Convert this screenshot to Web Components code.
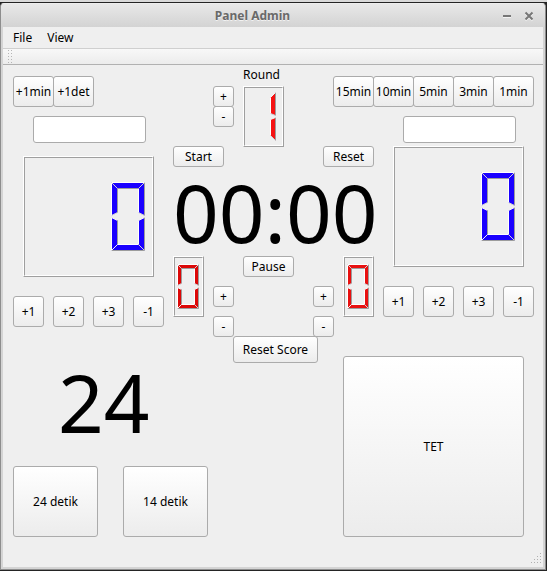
<!DOCTYPE html>
<html lang="id"><head><meta charset="utf-8"><title>Panel Admin</title>
<style>
html,body{margin:0;height:100%;overflow:hidden;background:#2b2b2b}
body{font:12px/16px "Noto Sans","Open Sans",sans-serif;color:#000}
</style></head><body>
<panel-window caption="Panel Admin">
  <menu-bar slot="menu"><span>File</span><span>View</span></menu-bar>
  <tool-strip slot="tools"></tool-strip>
  <control-board>
    <button-row style="--c:2;--r:2;--gap:-1px"><push-button style="--w:41px">+1min</push-button><push-button style="--w:41px">+1det</push-button></button-row>
    <text-field style="--c:4;--r:6"></text-field>
    <lcd-number digit="0" dw="33" dh="68" t="6" color="#1a00ff" style="--c:3;--r:10;--w:131px;--h:121px;--pr:7px"></lcd-number>
    <button-row style="--c:2;--r:24;--gap:9px"><push-button>+1</push-button><push-button>+2</push-button><push-button>+3</push-button><push-button>-1</push-button></button-row>

    <push-button style="--c:22;--r:3;--w:21px;--h:21px">+</push-button>
    <push-button style="--c:22;--r:5;--w:21px;--h:21px">-</push-button>
    <text-label style="--c:25;--r:1">Round</text-label>
    <lcd-number digit="1" dw="24" dh="48" t="5" color="#f51313" style="--c:25;--r:3;--w:41px;--h:61px;--pr:6px"></lcd-number>
    <push-button style="--c:18;--r:9;--w:51px;--h:21px">Start</push-button>
    <push-button style="--c:33;--r:9;--w:51px;--h:21px">Reset</push-button>
    <big-digits style="--c:18;--r:12">00:00</big-digits>
    <push-button style="--c:25;--r:20;--w:51px;--h:21px">Pause</push-button>
    <lcd-number digit="0" dw="21" dh="44" t="4" color="#dc0808" style="--c:18;--r:20;--w:31px;--h:61px;--pr:3px"></lcd-number>
    <button-row class="v" style="--c:22;--r:23;--gap:9px"><push-button style="--w:21px;--h:21px">+</push-button><push-button style="--w:21px;--h:21px">-</push-button></button-row>
    <button-row class="v" style="--c:32;--r:23;--gap:9px"><push-button style="--w:21px;--h:21px">+</push-button><push-button style="--w:21px;--h:21px">-</push-button></button-row>
    <lcd-number digit="0" dw="21" dh="44" t="4" color="#e81010" style="--c:35;--r:20;--w:31px;--h:61px;--pr:3px"></lcd-number>
    <push-button style="--c:24;--r:28;--w:85px;--h:27px">Reset Score</push-button>

    <button-row style="--c:34;--r:2;--gap:-1px"><push-button style="--w:41px">15min</push-button><push-button style="--w:41px">10min</push-button><push-button style="--w:41px">5min</push-button><push-button style="--w:41px">3min</push-button><push-button style="--w:41px">1min</push-button></button-row>
    <text-field style="--c:41;--r:6"></text-field>
    <lcd-number digit="0" dw="33" dh="68" t="6" color="#1a00ff" style="--c:40;--r:9;--w:131px;--h:121px;--pr:7px"></lcd-number>
    <button-row style="--c:39;--r:23;--gap:9px"><push-button>+1</push-button><push-button>+2</push-button><push-button>+3</push-button><push-button>-1</push-button></button-row>

    <big-digits style="--c:6;--r:31;--indent:5px">24</big-digits>
    <button-row style="--c:2;--r:41;--gap:25px"><push-button style="--w:85px;--h:71px">24 detik</push-button><push-button style="--w:85px;--h:71px">14 detik</push-button></button-row>
    <push-button style="--c:35;--r:30;--w:181px;--h:181px">TET</push-button>
  </control-board>
</panel-window>
<script>
const cell = 'grid-column-start:var(--c,auto);grid-row-start:var(--r,auto);';
function define(name, html, setup) {
  customElements.define(name, class extends HTMLElement {
    constructor() {
      super();
      this.attachShadow({mode:'open'}).innerHTML = html;
    }
    connectedCallback() { if (setup) setup(this, this.shadowRoot); }
  });
}

define('panel-window', `<style>
:host{display:flex;flex-direction:column;box-sizing:border-box;width:547px;height:571px;border-top:2px solid #d9d9d9;background:#242424;padding:1px 1px 1px 0}
.frame{flex:1;display:flex;flex-direction:column;box-sizing:border-box;border:1px solid #8d8d8d;border-top-color:#ededed;border-radius:4px 4px 0 0;background:#d4d4d4;padding:0 2px 2px;overflow:hidden}
header{height:23px;flex:none;margin:0 -2px;display:grid;grid-template-columns:1fr 48px;align-items:center;background:linear-gradient(#e8e8e8,#d3d3d3);color:#696969;font-weight:bold;text-shadow:0 1px #f2f2f2}
h1{font:inherit;margin:0;padding-left:7px;text-align:center}
svg{width:48px;height:23px;display:block}
main{flex:1;background:#efefef;display:flex;flex-direction:column;min-height:0}
</style><div class="frame"><header><h1></h1>
<svg viewBox="0 0 48 23" fill="none" stroke-width="2"><path d="M6 13h8M28.5 9.5l7 7m0-7l-7 7" stroke="#f4f4f4"/><path d="M6 12h8M28.5 8.5l7 7m0-7l-7 7" stroke="#777"/></svg></header>
<main><slot name="menu"></slot><slot name="tools"></slot><slot></slot></main></div>`,
(e, r) => r.querySelector('h1').textContent = e.getAttribute('caption'));

define('menu-bar', `<style>:host{display:flex;gap:15px;height:21px;flex:none;padding-left:10px;line-height:21px}</style><slot></slot>`);

define('tool-strip', `<style>:host{display:flex;box-sizing:border-box;flex:none;height:17px;border-top:1px solid #cfcfcf;border-bottom:1px solid #b1b1b1;background:linear-gradient(#f8f8f8,#ececec)}
svg{width:14px;height:15px}</style><svg viewBox="0 0 14 15" fill="#b5b5b5" shape-rendering="crispEdges"><path d="M5 1h1v1h-1zM8 1h1v1h-1zM5 4h1v1h-1zM8 4h1v1h-1zM5 7h1v1h-1zM8 7h1v1h-1zM5 10h1v1h-1zM8 10h1v1h-1zM5 13h1v1h-1zM8 13h1v1h-1z"/></svg>`);

define('control-board', `<style>:host{flex:1;display:grid;grid-template-columns:repeat(54,10px);grid-template-rows:repeat(50,10px);place-items:start;padding-top:1px;min-height:0;overflow:hidden}
svg{grid-area:50/54;width:12px;height:12px;place-self:end;margin-bottom:1px}</style><slot></slot>
<svg viewBox="0 0 12 12" fill="#b0b0b0" shape-rendering="crispEdges"><path d="M0 9h1v1h-1zM3 9h1v1h-1zM6 9h1v1h-1zM9 9h1v1h-1zM3 6h1v1h-1zM6 6h1v1h-1zM9 6h1v1h-1zM6 3h1v1h-1zM9 3h1v1h-1zM9 0h1v1h-1z"/></svg>`);

define('button-row', `<style>:host{display:flex;${cell}}:host(.v){flex-direction:column}
::slotted(:not(:first-child)){margin-left:var(--gap)}
:host(.v) ::slotted(:not(:first-child)){margin-left:0;margin-top:var(--gap)}</style><slot></slot>`);

define('push-button', `<style>:host{display:block;${cell}}
button{display:flex;align-items:center;justify-content:center;box-sizing:border-box;width:var(--w,31px);height:var(--h,31px);margin:0;padding:0;border:1px solid #ababab;border-radius:3px;background:linear-gradient(#fff,#ececec);font:inherit;color:#000;white-space:nowrap}</style><button><slot></slot></button>`);

define('text-field', `<style>:host{display:block;${cell}}
input{display:block;box-sizing:border-box;width:113px;height:27px;margin:0;border:1px solid #ababab;border-radius:3px;background:#fff;font:inherit}</style><input type="text" aria-label="Nama">`);

define('text-label', `<style>:host{display:block;${cell}padding-top:1px;white-space:nowrap}</style><slot></slot>`);

define('big-digits', `<style>:host{display:block;${cell}padding-left:var(--indent,0);font-size:80px;line-height:72px;white-space:nowrap}</style><slot></slot>`);

define('lcd-number', `<style>:host{display:block;${cell}}
.out{box-sizing:border-box;width:var(--w);height:var(--h);border:1px solid;border-color:#fff #9f9f9f #9f9f9f #fff;display:flex}
.in{flex:1;border:1px solid;border-color:#9f9f9f #fff #fff #9f9f9f;display:flex;align-items:center;justify-content:flex-end;padding-right:var(--pr)}
svg{display:block;flex:none}</style><div class="out"><div class="in"></div></div>`,
(e, r) => {
  const W = +e.getAttribute('dw'), H = +e.getAttribute('dh'), t = +e.getAttribute('t');
  const m = H / 2, k = Math.floor(t / 2), color = e.getAttribute('color');
  // Each segment lists its corners clockwise, starting at the outer edge.
  const right = [
    [[W,0],[W,m-1],[W-t,m-k-1],[W-t,t]],
    [[W,m+1],[W,H],[W-t,H-t],[W-t,m+k+1]]
  ];
  const left = [
    [[0,0],[t,t],[t,m-k-1],[0,m-1]],
    [[0,m+1],[t,m+k+1],[t,H-t],[0,H]]
  ];
  const caps = [
    [[0,0],[W,0],[W-t,t],[t,t]],
    [[t,H-t],[W-t,H-t],[W,H],[0,H]]
  ];
  const list = e.getAttribute('digit') === '1' ? right : [...left, ...right, ...caps];
  let s = '';
  for (const p of list) {
    s += `<polygon points="${p.join(' ')}" fill="${color}"/>`;
    p.forEach((a, i) => {
      const b = p[(i + 1) % p.length], dx = b[0]-a[0], dy = b[1]-a[1];
      // Light falls from the top left; a clockwise edge's outward normal is (dy, -dx).
      const lit = dy - dx < 0;
      const diagonal = dx && dy;
      s += `<line x1="${a[0]}" y1="${a[1]}" x2="${b[0]}" y2="${b[1]}" stroke="${diagonal ? (lit ? '#f4f4f4' : '#cfcfd6') : (lit ? '#fff' : '#9c9c9c')}"/>`;
    });
  }
  r.querySelector('.in').innerHTML = `<svg width="${W+1}" height="${H+1}" viewBox="-.5 -.5 ${W+1} ${H+1}">${s}</svg>`;
});
</script></body></html>
